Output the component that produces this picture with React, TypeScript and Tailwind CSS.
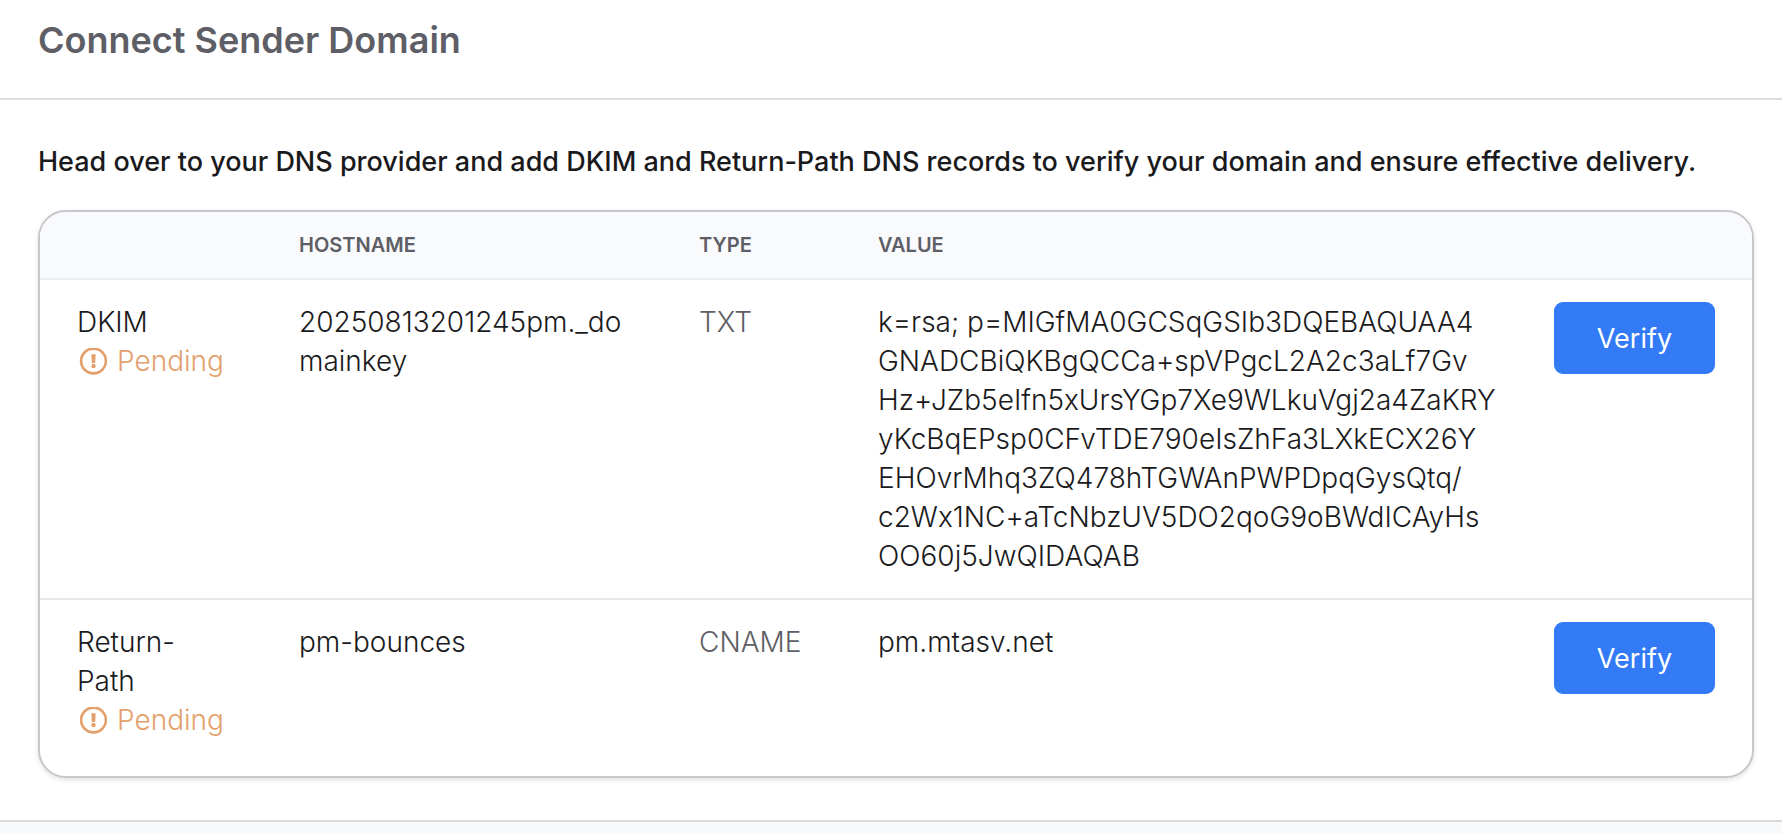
const records = [
  {
    name: ['DKIM'],
    hostname: ['20250813201245pm._do', 'mainkey'],
    type: 'TXT',
    value: [
      'k=rsa; p=MIGfMA0GCSqGSIb3DQEBAQUAA4',
      'GNADCBiQKBgQCCa+spVPgcL2A2c3aLf7Gv',
      'Hz+JZb5eIfn5xUrsYGp7Xe9WLkuVgj2a4ZaKRY',
      'yKcBqEPsp0CFvTDE790eIsZhFa3LXkECX26Y',
      'EHOvrMhq3ZQ478hTGWAnPWPDpqGysQtq/',
      'c2Wx1NC+aTcNbzUV5DO2qoG9oBWdICAyHs',
      'OO60j5JwQIDAQAB',
    ],
  },
  {
    name: ['Return-', 'Path'],
    hostname: ['pm-bounces'],
    type: 'CNAME',
    value: ['pm.mtasv.net'],
  },
];

const Lines = ({ lines }: { lines: string[] }) => (
  <>
    {lines.map((line) => (
      <span key={line} className="block whitespace-nowrap">{line}</span>
    ))}
  </>
);

const Pending = () => (
  <div className="flex items-center gap-2.5 pl-[2px] text-[#e3a06c]">
    <svg className="w-7 h-7 shrink-0" viewBox="0 0 28 28" fill="none" aria-hidden="true">
      <circle cx="14.5" cy="13" r="12.4" stroke="currentColor" strokeWidth="2.6" />
      <path d="M12.3 6.2h4.4l-.6 8.8h-3.2z" fill="currentColor" />
      <circle cx="14.5" cy="18" r="2.2" fill="currentColor" />
    </svg>
    Pending
  </div>
);

const App = () => {
  return (
    <div className="min-h-screen flex flex-col bg-white font-['Inter','Liberation_Sans',sans-serif] text-[#1a1a1c]">
      <header className="px-[38px] pt-4 pb-[34px] border-b-2 border-[#dcdcde]">
        <h1 className="text-[36px] leading-[48px] font-semibold text-[#5e5e66]">Connect Sender Domain</h1>
      </header>

      <main className="pl-[38px] pr-7 pt-[42px] pb-[42px]">
        <p className="text-[27px] leading-[40px] font-medium mb-7">
          Head over to your DNS provider and add DKIM and Return-Path DNS records to verify your domain and ensure effective delivery.
        </p>

        <div className="border-2 border-[#c6c6cc] rounded-[28px] overflow-hidden shadow-[0_2px_5px_rgba(0,0,0,0.12)]">
          <table className="w-full table-fixed text-left text-[28px] leading-[39px] font-light">
            <colgroup>
              <col className="w-[259px]" />
              <col className="w-[400px]" />
              <col className="w-[179px]" />
              <col />
              <col className="w-[198px]" />
            </colgroup>
            <thead className="bg-[#f9fafc]">
              <tr className="h-[67px] border-b-2 border-[#eeeff6] text-[20px] leading-[28px] text-[#5e5e66]">
                <th scope="col" className="pl-[37px]" aria-label="Record"></th>
                <th scope="col" className="font-semibold">HOSTNAME</th>
                <th scope="col" className="font-semibold">TYPE</th>
                <th scope="col" className="font-semibold">VALUE</th>
                <th scope="col" aria-label="Action"></th>
              </tr>
            </thead>
            <tbody>
              {records.map((record) => (
                <tr key={record.type} className="align-top border-b-2 border-[#e8e8ea] last:border-b-0">
                  <td className="pl-[37px] pt-[23px] pb-[22px] [tr:last-child>&]:pb-9">
                    <Lines lines={record.name} />
                    <Pending />
                  </td>
                  <td className="pt-[23px] pb-[22px]"><Lines lines={record.hostname} /></td>
                  <td className="pt-[23px] pb-[22px] text-[#5e5e66]">{record.type}</td>
                  <td className="pt-[23px] pb-[22px]"><Lines lines={record.value} /></td>
                  <td className="pt-[22px] pb-[22px] pr-[37px]">
                    <button type="button" className="block w-full h-[72px] rounded-[9px] bg-[#337af7] text-[27px] text-white font-normal">
                      Verify
                    </button>
                  </td>
                </tr>
              ))}
            </tbody>
          </table>
        </div>
      </main>

      <footer className="flex-1 border-t-2 border-[#d8dadd] bg-[#f8f9fb]"></footer>
    </div>
  );
};

export default App;
